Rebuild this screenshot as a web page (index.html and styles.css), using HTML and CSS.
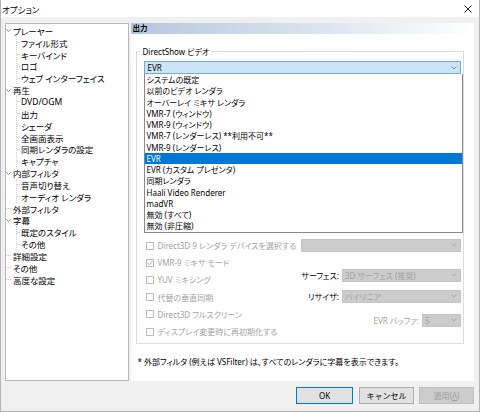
FILE: index.html
```html
<!DOCTYPE html>
<html lang="ja">
<head>
<meta charset="utf-8">
<title>オプション</title>
<link rel="stylesheet" href="styles.css">
</head>
<body>
<div class="window">
  <div class="titlebar">
    <span class="title">オプション</span>
    <svg class="close" width="8" height="8" viewBox="0 0 8 8"><path d="M0.5 0.5 L7.5 7.5 M7.5 0.5 L0.5 7.5" stroke="#222" stroke-width="1" fill="none"/></svg>
  </div>
  <div class="main">
    <div class="tree">
      <ul class="root">
        <li>
          <div class="node"><span class="exp"><svg width="5" height="3" viewBox="0 0 5 3"><path d="M0.3 0.3 L2.5 2.5 L4.7 0.3" stroke="#777" stroke-width="0.9" fill="none"/></svg></span>プレーヤー</div>
          <ul class="kids">
            <li class="node">ファイル形式</li>
            <li class="node">キーバインド</li>
            <li class="node">ロゴ</li>
            <li class="node">ウェブ インターフェイス</li>
          </ul>
        </li>
        <li>
          <div class="node"><span class="exp"><svg width="5" height="3" viewBox="0 0 5 3"><path d="M0.3 0.3 L2.5 2.5 L4.7 0.3" stroke="#777" stroke-width="0.9" fill="none"/></svg></span>再生</div>
          <ul class="kids">
            <li class="node">DVD/OGM</li>
            <li class="node">出力</li>
            <li class="node">シェーダ</li>
            <li class="node">全画面表示</li>
            <li class="node">同期レンダラの設定</li>
            <li class="node">キャプチャ</li>
          </ul>
        </li>
        <li>
          <div class="node"><span class="exp"><svg width="5" height="3" viewBox="0 0 5 3"><path d="M0.3 0.3 L2.5 2.5 L4.7 0.3" stroke="#777" stroke-width="0.9" fill="none"/></svg></span>内部フィルタ</div>
          <ul class="kids">
            <li class="node">音声切り替え</li>
            <li class="node">オーディオ レンダラ</li>
          </ul>
        </li>
        <li><div class="node"><span class="exp tick"></span>外部フィルタ</div></li>
        <li>
          <div class="node"><span class="exp"><svg width="5" height="3" viewBox="0 0 5 3"><path d="M0.3 0.3 L2.5 2.5 L4.7 0.3" stroke="#777" stroke-width="0.9" fill="none"/></svg></span>字幕</div>
          <ul class="kids">
            <li class="node">既定のスタイル</li>
            <li class="node">その他</li>
          </ul>
        </li>
        <li><div class="node"><span class="exp tick"></span>詳細設定</div></li>
        <li><div class="node"><span class="exp tick"></span>その他</div></li>
        <li><div class="node"><span class="exp tick"></span>高度な設定</div></li>
      </ul>
    </div>
    <div class="panel">
      <div class="panel-head">出力</div>
      <fieldset class="group">
        <legend>DirectShow ビデオ</legend>
        <div class="combo-wrap">
          <div class="combo open"><span>EVR</span><svg class="arrow" width="6" height="4" viewBox="0 0 6 4"><path d="M0.5 0.5 L3 3 L5.5 0.5" stroke="#8a8a8a" stroke-width="0.9" fill="none"/></svg></div>
          <ul class="dropdown">
            <li>システムの既定</li>
            <li>以前のビデオ レンダラ</li>
            <li>オーバーレイ ミキサ レンダラ</li>
            <li>VMR-7 (ウィンドウ)</li>
            <li>VMR-9 (ウィンドウ)</li>
            <li>VMR-7 (レンダーレス) **利用不可**</li>
            <li>VMR-9 (レンダーレス)</li>
            <li class="sel">EVR</li>
            <li>EVR (カスタム プレゼンタ)</li>
            <li>同期レンダラ</li>
            <li>Haali Video Renderer</li>
            <li>madVR</li>
            <li>無効 (すべて)</li>
            <li>無効 (非圧縮)</li>
          </ul>
        </div>
        <div class="covered"></div>
        <div class="options">
          <div class="checks">
            <div class="check"><span class="box"></span>Direct3D 9 レンダラ デバイスを選択する</div>
            <div class="check"><span class="box"><svg width="8" height="8" viewBox="0 0 8 8"><path d="M1.5 4 L3.3 5.8 L6.6 2" stroke="#a8a8a8" stroke-width="0.9" fill="none"/></svg></span>VMR-9 ミキサ モード</div>
            <div class="check"><span class="box"></span>YUV ミキシング</div>
            <div class="check"><span class="box"></span>代替の垂直同期</div>
            <div class="check"><span class="box"></span>Direct3D フルスクリーン</div>
            <div class="check"><span class="box"></span>ディスプレイ変更時に再初期化する</div>
          </div>
          <div class="selects">
            <div class="combo disabled full"><span></span><svg class="arrow" width="6" height="4" viewBox="0 0 6 4"><path d="M0.5 0.5 L3 3 L5.5 0.5" stroke="#a8a8a8" stroke-width="0.9" fill="none"/></svg></div>
            <div class="field surface"><span class="lbl">サーフェス:</span><div class="combo disabled wide"><span>3D サーフェス (推奨)</span><svg class="arrow" width="6" height="4" viewBox="0 0 6 4"><path d="M0.5 0.5 L3 3 L5.5 0.5" stroke="#a8a8a8" stroke-width="0.9" fill="none"/></svg></div></div>
            <div class="field resizer"><span class="lbl">リサイザ:</span><div class="combo disabled wide"><span>バイリニア</span><svg class="arrow" width="6" height="4" viewBox="0 0 6 4"><path d="M0.5 0.5 L3 3 L5.5 0.5" stroke="#a8a8a8" stroke-width="0.9" fill="none"/></svg></div></div>
            <div class="field buffer"><span class="lbl dim">EVR バッファ:</span><div class="combo disabled small"><span>5</span><svg class="arrow" width="6" height="4" viewBox="0 0 6 4"><path d="M0.5 0.5 L3 3 L5.5 0.5" stroke="#a8a8a8" stroke-width="0.9" fill="none"/></svg></div></div>
          </div>
        </div>
      </fieldset>
      <p class="note">* 外部フィルタ (例えば VSFilter) は、すべてのレンダラに字幕を表示できます。</p>
    </div>
  </div>
  <div class="footer">
    <button class="btn default">OK</button>
    <button class="btn">キャンセル</button>
    <button class="btn off">適用(<u>A</u>)</button>
  </div>
</div>
</body>
</html>
```

FILE: styles.css
```css
* { box-sizing: border-box; }
html, body { margin: 0; padding: 0; }
body {
  font-family: "Noto Sans", "Noto Sans CJK JP", sans-serif;
  font-feature-settings: "palt";
  font-size: 8px;
  color: #000;
  background: #f0f0f0;
}
.window {
  width: 480px;
  height: 412px;
  border: 1px solid #b4b4b4;
  border-top: none;
  background: #f0f0f0;
  display: flex;
  flex-direction: column;
}
.titlebar {
  height: 17px;
  background: #fff;
  display: flex;
  align-items: center;
  justify-content: space-between;
  padding: 0 7px 0 1px;
  flex: none;
}
.title { font-size: 8.5px; }
.close { display: block; }
.main {
  display: flex;
  gap: 2px;
  padding: 6px 5px 0 4px;
  height: 364px;
  flex: none;
}
.tree {
  width: 125px;
  background: #fff;
  border: 1px solid #b9b9b9;
  padding-top: 1px;
  font-size: 8.5px;
}
.tree ul { list-style: none; margin: 0; padding: 0; }
.root { margin-left: 3px; }
.node {
  height: 11.85px;
  display: flex;
  align-items: center;
  white-space: nowrap;
}
.exp {
  width: 5px;
  margin-right: 2px;
  display: flex;
  align-items: center;
  justify-content: center;
}
.exp svg { display: block; }
.exp.tick {
  height: 1px;
  border-top: 1px dotted #c4c4c4;
}
.kids {
  margin-left: 10px !important;
  border-left: 1px dotted #cfcfcf;
}
.kids .node::before {
  content: "";
  width: 3px;
  margin-right: 1px;
  border-top: 1px dotted #c4c4c4;
}
.panel {
  flex: 1;
  background: #fff;
  display: flex;
  flex-direction: column;
  margin-right: 0;
}
.panel-head {
  height: 11px;
  line-height: 11px;
  padding-left: 1px;
  font-weight: bold;
  font-size: 7.5px;
  background: linear-gradient(to right, #b5c7de 0%, #dbe4ef 55%, #ffffff 100%);
}
.group {
  margin: 12px 10px 0 5px;
  padding: 4px 2px 3px 7px;
  border: 1px solid #dcdcdc;
  min-width: 0;
}
.group legend {
  margin-left: -4px;
  padding: 0 2px;
  line-height: 11px;
}
.combo-wrap { position: relative; }
.combo {
  height: 13px;
  display: flex;
  align-items: center;
  justify-content: space-between;
  padding: 0 3px 0 2px;
  border: 1px solid #bdbdbd;
  white-space: nowrap;
}
.combo .arrow { display: block; flex: none; }
.combo.open {
  background: #cce4f7;
  border-color: #7aa7d9;
}
.dropdown {
  position: absolute;
  top: 100%;
  left: 0;
  width: calc(100% + 2px);
  margin: 0;
  padding: 0;
  list-style: none;
  background: #fff;
  border: 1px solid #8a8a8a;
  border-top: none;
  z-index: 2;
}
.dropdown li {
  height: 11.25px;
  line-height: 11.25px;
  padding-left: 1px;
  white-space: nowrap;
}
.dropdown li.sel {
  background: #0078d7;
  color: #fff;
}
.covered { height: 163px; }
.options { display: flex; }
.checks { width: 157px; flex: none; }
.check {
  height: 17.2px;
  display: flex;
  align-items: center;
  color: #a3a3a3;
  white-space: nowrap;
}
.box {
  width: 8px;
  height: 8px;
  margin: 0 3px 0 2px;
  border: 1px solid #bcbcbc;
  background: #fff;
  flex: none;
  display: flex;
}
.box svg { margin: -1px; }
.selects { flex: 1; display: flex; flex-direction: column; }
.combo.disabled {
  background: #cccccc;
  border-color: #c4c4c4;
  color: #a3a3a3;
}
.combo.full { margin-top: 1.5px; }
.field {
  display: flex;
  justify-content: flex-end;
  align-items: center;
}
.field .lbl { margin-right: 3px; white-space: nowrap; }
.field .lbl.dim { color: #a3a3a3; }
.surface { margin-top: 17px; }
.resizer { margin-top: 8px; }
.buffer { margin-top: 11px; }
.combo.wide { width: 119px; }
.combo.small { width: 39px; }
.note {
  margin: 12px 0 0 6px;
  line-height: 11px;
  white-space: nowrap;
}
.footer {
  flex: 1;
  display: flex;
  justify-content: flex-end;
  align-items: center;
  gap: 5px;
  padding: 0 5px 2px 0;
}
.btn {
  font-family: inherit;
  font-size: 8px;
  height: 17px;
  width: 55px;
  padding: 0;
  margin: 0;
  background: #e1e1e1;
  border: 1px solid #adadad;
  color: #000;
}
.btn.default {
  width: 57px;
  border-color: #0078d7;
  margin-right: 1px;
}
.btn.off {
  background: #cccccc;
  border-color: #bfbfbf;
  color: #a0a0a0;
}
.btn u { text-decoration: underline; }
```
